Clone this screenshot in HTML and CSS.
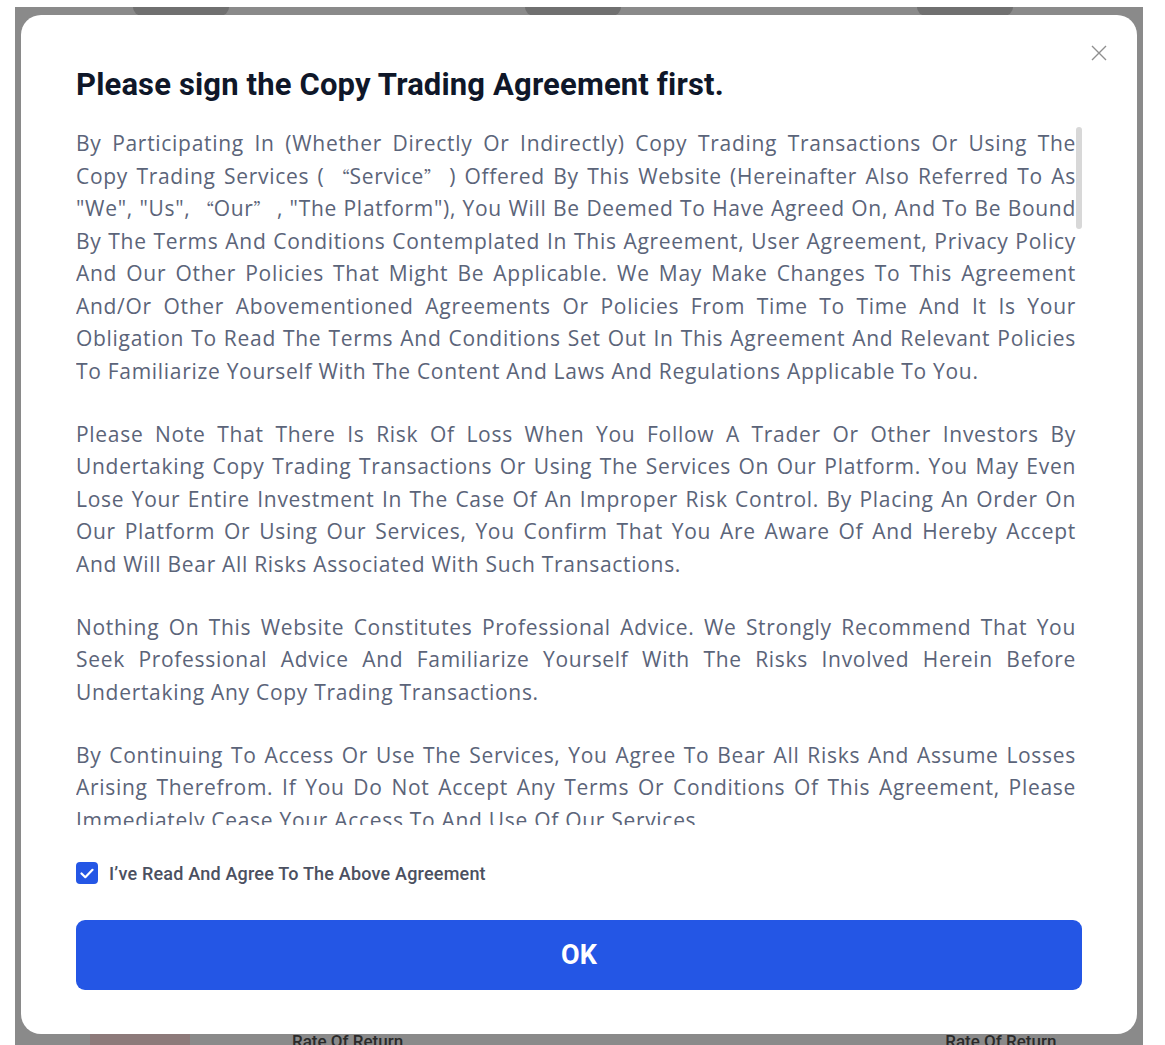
FILE: index.html
```html
<!DOCTYPE html>
<html lang="en">
<head>
    <meta charset="UTF-8">
    <meta name="viewport" content="width=device-width, initial-scale=1.0">
    <title>Copy Trading Agreement</title>
    <link rel="stylesheet" href="styles.css">
</head>
<body>
    <!-- page behind the dialog, dimmed -->
    <div class="page">
        <div class="page-top">
            <span class="pill"></span>
            <span class="pill"></span>
            <span class="pill"></span>
        </div>
        <div class="page-bottom">
            <span class="chart"></span>
            <span class="rate">Rate Of Return</span>
            <span class="rate">Rate Of Return</span>
        </div>
    </div>

    <div class="modal">
        <button class="close-btn" aria-label="Close">
            <svg width="16" height="16" viewBox="0 0 16 16"><path d="M1 1L15 15M15 1L1 15" stroke="#8f8f8f" stroke-width="1.4" fill="none"/></svg>
        </button>

        <h2 class="modal-title">Please sign the Copy Trading Agreement first.</h2>

        <div class="agreement-wrap">
            <div class="agreement">
                <p>By Participating In (Whether Directly Or Indirectly) Copy Trading Transactions Or Using The Copy Trading Services ( <span class="q" lang="zh-CN">“</span>Service<span class="q" lang="zh-CN">”</span> ) Offered By This Website (Hereinafter Also Referred To As "We", "Us", <span class="q" lang="zh-CN">“</span>Our<span class="q" lang="zh-CN">”</span> , "The Platform"), You Will Be Deemed To Have Agreed On, And To Be Bound By The Terms And Conditions Contemplated In This Agreement, User Agreement, Privacy Policy And Our Other Policies That Might Be Applicable. We May Make Changes To This Agreement And/Or Other Abovementioned Agreements Or Policies From Time To Time And It Is Your Obligation To Read The Terms And Conditions Set Out In This Agreement And Relevant Policies To Familiarize Yourself With The Content And Laws And Regulations Applicable To You.</p>
                <p>Please Note That There Is Risk Of Loss When You Follow A Trader Or Other Investors By Undertaking Copy Trading Transactions Or Using The Services On Our Platform. You May Even Lose Your Entire Investment In The Case Of An Improper Risk Control. By Placing An Order On Our Platform Or Using Our Services, You Confirm That You Are Aware Of And Hereby Accept And Will Bear All Risks Associated With Such Transactions.</p>
                <p>Nothing On This Website Constitutes Professional Advice. We Strongly Recommend That You Seek Professional Advice And Familiarize Yourself With The Risks Involved Herein Before Undertaking Any Copy Trading Transactions.</p>
                <p>By Continuing To Access Or Use The Services, You Agree To Bear All Risks And Assume Losses Arising Therefrom. If You Do Not Accept Any Terms Or Conditions Of This Agreement, Please Immediately Cease Your Access To And Use Of Our Services.</p>
                <p>1. Copy Trading Allows You To Automatically Replicate The Positions Opened By A Trader You Choose To Follow. The Platform Does Not Guarantee That Your Positions Will Be Opened Or Closed At The Same Price Or Time As The Positions Of The Trader, And Differences In Margin, Leverage, Market Depth And Execution May Lead To Different Results.</p>
                <p>2. Past Performance Of Any Trader Displayed On The Platform, Including But Not Limited To Rate Of Return, Win Rate, Profit And Loss And Number Of Followers, Is For Reference Only And Is Not A Reliable Indicator Of Future Performance.</p>
                <p>3. You Are Solely Responsible For Selecting The Traders You Follow, Setting The Amount, Leverage, Stop-Loss And Take-Profit Parameters Of Your Copy Trading, And Monitoring Your Account. You May Stop Following A Trader At Any Time In Accordance With The Rules Of The Platform.</p>
                <p>4. A Profit Sharing Ratio May Be Set By The Trader. Where Your Copy Trading Generates Net Profits During A Settlement Period, The Corresponding Share Of Profits Will Be Deducted From Your Account And Paid To The Trader According To The Rules Of The Platform.</p>
                <p>5. The Platform Reserves The Right To Suspend Or Terminate The Service, Remove Any Trader Or Restrict Your Access To The Service At Any Time Without Prior Notice If It Believes That Such Action Is Necessary For Risk Control, Compliance Or Security Reasons.</p>
                <p>6. To The Maximum Extent Permitted By Applicable Laws, The Platform Shall Not Be Liable For Any Loss Or Damage Arising From Your Use Of The Service, Including Losses Caused By Market Fluctuations, System Failures, Network Delays Or Actions Of Traders.</p>
            </div>
            <span class="thumb"></span>
        </div>

        <label class="agree">
            <span class="check">
                <svg width="14" height="11" viewBox="0 0 14 11"><path d="M1.5 5.5L5.3 9.2L12.5 1.8" stroke="#fff" stroke-width="2.2" fill="none" stroke-linecap="round" stroke-linejoin="round"/></svg>
            </span>
            I’ve Read And Agree To The Above Agreement
        </label>

        <button class="ok-btn">OK</button>
    </div>
</body>
</html>
```

FILE: styles.css
```css
* {
    box-sizing: border-box;
}

body {
    margin: 0;
    height: 100vh;
    overflow: hidden;
    background: #fff;
    font-family: 'Open Sans', 'Noto Sans', sans-serif;
}

.page {
    margin: 7px 22px 0 15px;
    height: calc(100vh - 7px);
    background: #8a8a8a;
    display: flex;
    flex-direction: column;
    justify-content: space-between;
}

.page-top {
    display: flex;
    gap: 296px;
    padding-left: 118px;
}

.pill {
    width: 96px;
    height: 9px;
    background: #707070;
    border-radius: 0 0 30px 30px;
}

.page-bottom {
    display: flex;
    align-items: flex-end;
    height: 14px;
    overflow: hidden;
}

.chart {
    width: 100px;
    height: 12px;
    margin-left: 75px;
    background: #8d7a7a;
}

.rate {
    font-family: 'Roboto', sans-serif;
    font-size: 17px;
    font-weight: 500;
    color: #2a2a2a;
    line-height: 16px;
    height: 12px;
    overflow: hidden;
}

.rate:nth-of-type(2) {
    margin-left: 102px;
}

.rate:nth-of-type(3) {
    margin-left: 542px;
}

/* dialog */
.modal {
    position: fixed;
    left: 21px;
    top: 15px;
    width: 1116px;
    height: 1019px;
    background: #fff;
    border-radius: 20px;
    padding: 52px 55px 44px;
    display: flex;
    flex-direction: column;
}

.close-btn {
    position: absolute;
    top: 30px;
    right: 30px;
    width: 16px;
    height: 16px;
    padding: 0;
    border: none;
    background: transparent;
    cursor: pointer;
    display: flex;
}

.modal-title {
    margin: 0 0 24px;
    font-family: 'Roboto', sans-serif;
    font-size: 31px;
    font-weight: 700;
    line-height: 36px;
    letter-spacing: 0.15px;
    color: #0f1729;
}

.agreement-wrap {
    position: relative;
    height: 698px;
    margin-bottom: 3px;
    flex-shrink: 0;
}

.agreement {
    height: 100%;
    overflow-y: auto;
    scrollbar-width: none;
    padding-right: 6px;
    font-size: 21px;
    line-height: 32.5px;
    letter-spacing: 0.7px;
    color: #5b6479;
    text-align: justify;
}

.agreement p {
    margin: 0 0 30.5px;
}

.q {
    font-family: 'Noto Sans CJK SC', sans-serif;
    font-size: 0.8em;
    line-height: 1;
    letter-spacing: 0;
}

.thumb {
    position: absolute;
    top: 0;
    right: 0;
    width: 6px;
    height: 102px;
    background: #d8d8d8;
    border-radius: 3px;
}

.agree {
    margin-top: 34px;
    height: 22px;
    display: flex;
    align-items: center;
    gap: 11px;
    font-family: 'Roboto', sans-serif;
    font-size: 18px;
    font-weight: 500;
    letter-spacing: 0.2px;
    color: #4b5060;
    cursor: pointer;
}

.check {
    width: 22px;
    height: 22px;
    border-radius: 4px;
    background: #2456e5;
    display: flex;
    align-items: center;
    justify-content: center;
}

.ok-btn {
    margin-top: 36px;
    height: 70px;
    width: 100%;
    border: none;
    border-radius: 9px;
    background: #2456e5;
    color: #fff;
    font-family: 'Roboto', sans-serif;
    font-size: 27px;
    font-weight: 700;
    cursor: pointer;
}
```
